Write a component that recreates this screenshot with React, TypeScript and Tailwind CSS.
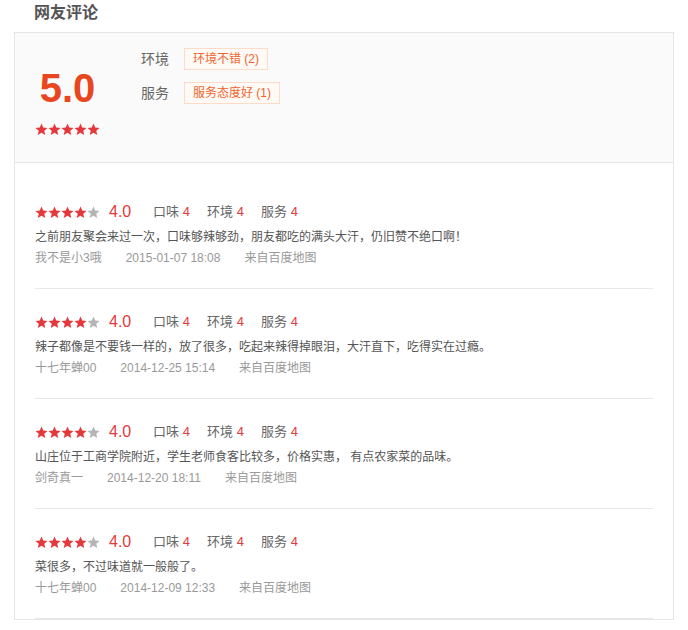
const FONT = '"Liberation Sans", "Noto Sans CJK SC", sans-serif';

const reviews = [
  {
    text: '之前朋友聚会来过一次，口味够辣够劲，朋友都吃的满头大汗，仍旧赞不绝口啊！',
    user: '我不是小3哦',
    time: '2015-01-07 18:08',
  },
  {
    text: '辣子都像是不要钱一样的，放了很多，吃起来辣得掉眼泪，大汗直下，吃得实在过瘾。',
    user: '十七年蝉00',
    time: '2014-12-25 15:14',
  },
  {
    text: '山庄位于工商学院附近，学生老师食客比较多，价格实惠， 有点农家菜的品味。',
    user: '剑奇真一',
    time: '2014-12-20 18:11',
  },
  {
    text: '菜很多，不过味道就一般般了。',
    user: '十七年蝉00',
    time: '2014-12-09 12:33',
  },
];

function Star({ on }: { on: boolean }) {
  return (
    <svg viewBox="0 0 24 24" className="w-[13px] h-[13px]">
      <path
        d="M12 1l3.2 7.3 7.9.7-6 5.2 1.8 7.8L12 17.9 5.1 22l1.8-7.8-6-5.2 7.9-.7z"
        fill={on ? '#e4393c' : '#b5b5b5'}
      />
    </svg>
  );
}

function Stars({ n }: { n: number }) {
  return (
    <div className="flex items-center">
      {[0, 1, 2, 3, 4].map((i) => (
        <Star key={i} on={i < n} />
      ))}
    </div>
  );
}

export default function App() {
  return (
    <div className="w-[688px] h-[630px] bg-white overflow-hidden" style={{ fontFamily: FONT }}>
      <h2 className="pl-[34px] pt-[3px] h-[32px] text-[16px] leading-[20px] font-bold text-[#555]">网友评论</h2>

      <div className="ml-[14px] w-[660px] border border-[#e6e6e6]">
        {/* summary */}
        <div className="h-[130px] bg-[#fafafa] border-b border-[#e6e6e6] flex">
          <div className="ml-[20px] w-[65px] flex flex-col items-center pt-[35px]">
            <div className="text-[40px] leading-[40px] font-bold text-[#e8461e]">5.0</div>
            <div className="mt-[15px]">
              <Stars n={5} />
            </div>
          </div>
          <div className="ml-[41px] pt-[15px] flex flex-col gap-[12px]">
            <div className="flex items-center h-[22px]">
              <span className="text-[14px] text-[#666] w-[43px]">环境</span>
              <span className="h-[22px] px-[8px] flex items-center text-[12px] text-[#f0642d] bg-[#fffaf6] border border-[#fcdcc8]">
                环境不错 (2)
              </span>
            </div>
            <div className="flex items-center h-[22px]">
              <span className="text-[14px] text-[#666] w-[43px]">服务</span>
              <span className="h-[22px] px-[8px] flex items-center text-[12px] text-[#f0642d] bg-[#fffaf6] border border-[#fcdcc8]">
                服务态度好 (1)
              </span>
            </div>
          </div>
        </div>

        {/* list */}
        <div className="px-[20px] pt-[16px]">
          {reviews.map((r, i) => (
            <div key={i} className="pt-[23px] pb-[20px] border-b border-[#e8e8e8]">
              <div className="flex items-center h-[20px]">
                <Stars n={4} />
                <span className="ml-[9px] text-[16px] text-[#e4393c] w-[44px]">4.0</span>
                <span className="text-[13px] text-[#666] w-[54px]">
                  口味 <span className="text-[#e4393c]">4</span>
                </span>
                <span className="text-[13px] text-[#666] w-[54px]">
                  环境 <span className="text-[#e4393c]">4</span>
                </span>
                <span className="text-[13px] text-[#666]">
                  服务 <span className="text-[#e4393c]">4</span>
                </span>
              </div>
              <p className="mt-[5px] text-[12px] leading-[20px] text-[#555]">{r.text}</p>
              <div className="mt-px flex text-[12px] leading-[20px] text-[#999]">
                <span className="mr-[24px]">{r.user}</span>
                <span className="mr-[24px]">{r.time}</span>
                <span>来自百度地图</span>
              </div>
            </div>
          ))}
        </div>
      </div>
    </div>
  );
}
